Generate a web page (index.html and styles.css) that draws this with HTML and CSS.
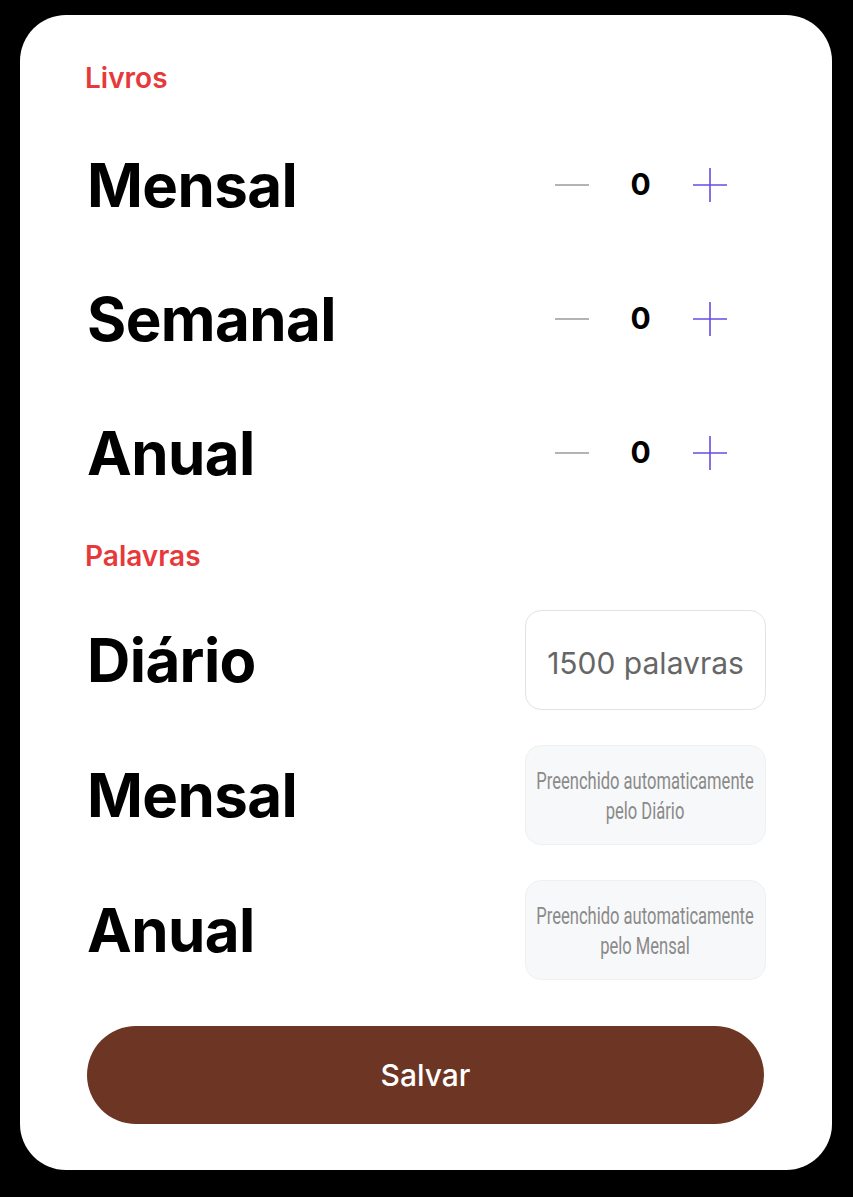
FILE: index.html
```html
<!DOCTYPE html>
<html lang="pt">
<head>
<meta charset="utf-8">
<title>Metas</title>
<link rel="stylesheet" href="styles.css">
</head>
<body>
<main class="card">
  <h2 class="section">Livros</h2>
  <div class="rows rows-books">
    <div class="row">
      <span class="name">Mensal</span>
      <div class="stepper">
        <button class="step minus" aria-label="Diminuir"><svg viewBox="0 0 34 34"><path d="M0 17H34"/></svg></button>
        <span class="count">0</span>
        <button class="step plus" aria-label="Aumentar"><svg viewBox="0 0 34 34"><path d="M0 17H34M17 0V34"/></svg></button>
      </div>
    </div>
    <div class="row">
      <span class="name">Semanal</span>
      <div class="stepper">
        <button class="step minus" aria-label="Diminuir"><svg viewBox="0 0 34 34"><path d="M0 17H34"/></svg></button>
        <span class="count">0</span>
        <button class="step plus" aria-label="Aumentar"><svg viewBox="0 0 34 34"><path d="M0 17H34M17 0V34"/></svg></button>
      </div>
    </div>
    <div class="row">
      <span class="name">Anual</span>
      <div class="stepper">
        <button class="step minus" aria-label="Diminuir"><svg viewBox="0 0 34 34"><path d="M0 17H34"/></svg></button>
        <span class="count">0</span>
        <button class="step plus" aria-label="Aumentar"><svg viewBox="0 0 34 34"><path d="M0 17H34M17 0V34"/></svg></button>
      </div>
    </div>
  </div>
  <h2 class="section section-words">Palavras</h2>
  <div class="rows rows-words">
    <div class="row row-input">
      <span class="name">Diário</span>
      <div class="field">1500 palavras</div>
    </div>
    <div class="row row-input">
      <span class="name">Mensal</span>
      <div class="field field-auto"><span class="auto-text">Preenchido automaticamente<br>pelo Diário</span></div>
    </div>
    <div class="row row-input">
      <span class="name">Anual</span>
      <div class="field field-auto"><span class="auto-text">Preenchido automaticamente<br>pelo Mensal</span></div>
    </div>
  </div>
  <button class="save">Salvar</button>
</main>
</body>
</html>
```
FILE: styles.css
```css
* { box-sizing: border-box; }
html, body { margin: 0; padding: 0; }
body {
  background: #000;
  width: 853px;
  height: 1197px;
  padding: 15px 21px 27px 20px;
  font-family: Inter, "Noto Sans", sans-serif;
}
.card {
  background: #fff;
  border-radius: 46px;
  height: 1155px;
  padding: 46px 66px 46px 65px;
  display: flex;
  flex-direction: column;
}
.section {
  margin: 0;
  font-size: 28px;
  line-height: 34px;
  font-weight: 600;
  color: #e8393a;
}
.rows { display: flex; flex-direction: column; }
.rows-books { margin-top: 23px; }
.row {
  height: 134px;
  display: flex;
  align-items: center;
  justify-content: space-between;
}
.name {
  font-size: 60px;
  font-weight: 700;
  color: #000;
  letter-spacing: -0.6px;
  padding-left: 2px;
}
.stepper {
  display: grid;
  grid-template-columns: repeat(3, 69px);
  align-items: center;
  justify-items: center;
  margin-right: 22px;
}
.step {
  border: 0;
  background: none;
  padding: 0;
  width: 34px;
  height: 34px;
  display: flex;
}
.step svg { width: 34px; height: 34px; fill: none; stroke-width: 1.6; }
.minus svg { stroke: #9b9b9b; }
.plus svg { stroke: #6a4be3; }
.count {
  font-size: 30px;
  font-weight: 700;
  color: #000;
  margin-top: -2px;
}
.section-words { margin-top: 19px; }
.rows-words { margin-top: 37px; gap: 35px; }
.row-input { height: 100px; }
.field {
  width: 241px;
  height: 100px;
  border: 1px solid #e3e3e3;
  border-radius: 16px;
  display: flex;
  align-items: center;
  justify-content: center;
  text-align: center;
  font-size: 30px;
  color: #666;
  padding-top: 6px;
}
.field-auto {
  background: #f7f8f9;
  border-color: #eef0f1;
  font-family: Roboto, sans-serif;
  font-size: 23px;
  line-height: 30px;
  color: #8a8a8a;
  padding-top: 4px;
}
.auto-text {
  display: inline-block;
  white-space: nowrap;
  transform: scaleX(0.72);
  flex-shrink: 0;
}
.save {
  margin-top: 46px;
  height: 98px;
  border: 0;
  border-radius: 49px;
  background: #6d3523;
  color: #fff;
  font-family: Inter, sans-serif;
  font-size: 30px;
  font-weight: 500;
  width: 677px;
  margin-left: 2px;
}
```
